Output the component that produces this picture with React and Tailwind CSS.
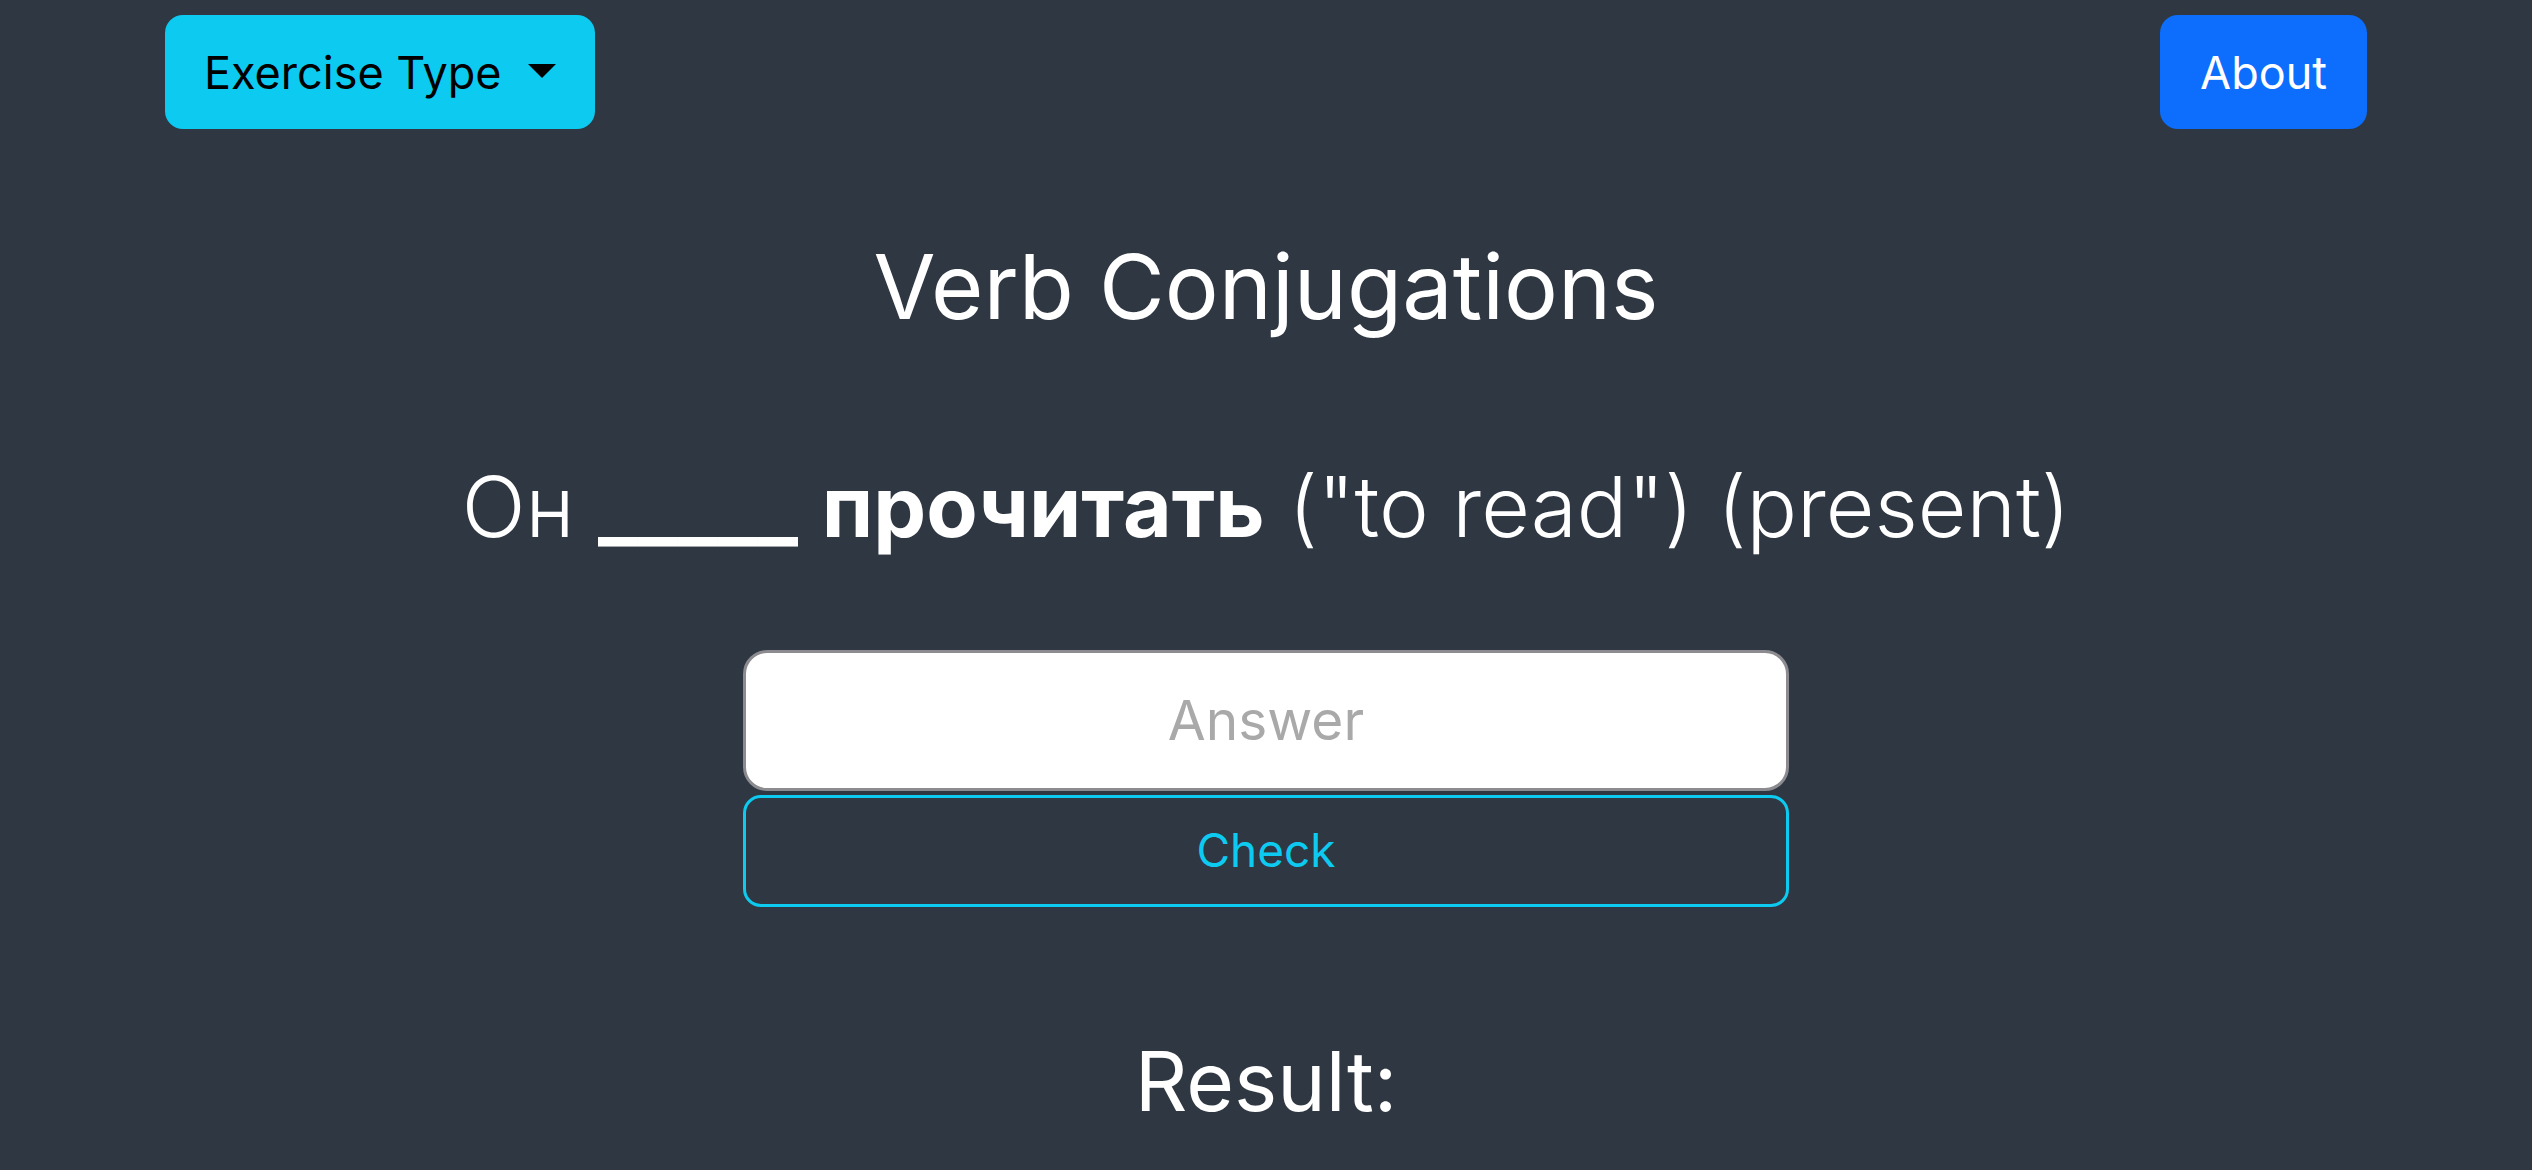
import React, { useState } from 'react';

// Verb conjugation drill screen
const App = () => {
  const [answer, setAnswer] = useState('');

  return (
    <div
      className="min-h-screen w-full bg-[#2e3742] text-white"
      style={{ fontFamily: 'Inter, "Noto Sans", sans-serif' }}
    >
      {/* top bar */}
      <div className="flex items-center justify-between px-[165px] pt-[15px]">
        <button className="flex h-[114px] items-center rounded-[18px] bg-[#0dcaf0] px-[39px] text-[45px] leading-none text-black">
          Exercise Type
          <span className="ml-[26px] mt-[-2px] h-0 w-0 border-x-[14px] border-t-[14px] border-x-transparent border-t-black" />
        </button>
        <button className="flex h-[114px] items-center rounded-[18px] bg-[#0d6efd] px-[40px] text-[45px] leading-none text-white">
          About
        </button>
      </div>

      {/* main */}
      <div className="flex flex-col items-center">
        <h2 className="mt-[104px] text-[90px] font-normal leading-[1.2]">Verb Conjugations</h2>

        <p className="mt-[116px] text-[84px] font-light leading-[1.2]">
          Он <span className="font-bold">_____</span> <span className="font-bold">прочитать</span> ("to read") (present)
        </p>

        <div className="mt-[92px] flex w-[1046px] flex-col gap-[4px]">
          <input
            value={answer}
            onChange={(e) => setAnswer(e.target.value)}
            placeholder="Answer"
            className="h-[141px] w-full rounded-[24px] border-[3px] border-[#8c8c90] bg-white px-[48px] text-center text-[55px] text-black outline-none placeholder:text-[#a9a9a9]"
          />
          <button className="h-[112px] w-full rounded-[18px] border-[3px] border-[#0dcaf0] text-[46px] text-[#0dcaf0]">
            Check
          </button>
        </div>

        <h2 className="mt-[126px] text-[82px] font-normal leading-[1.2]">Result:</h2>
      </div>
    </div>
  );
};

export default App;
